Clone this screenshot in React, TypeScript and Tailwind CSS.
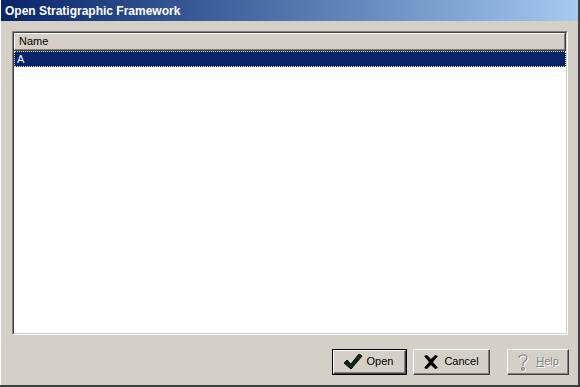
const font = { fontFamily: '"Liberation Sans", "DejaVu Sans", sans-serif' }

const CheckIcon = () => (
  <svg width="20" height="19" viewBox="0 0 20 19">
    <path d="M1 11 L4 8 L8 12 L16 2 L19 4 L8 17 Z" fill="#0b2a10" stroke="#000" strokeWidth="1" />
  </svg>
)

const XIcon = () => (
  <svg width="16" height="16" viewBox="0 0 16 16">
    <path d="M1 2 L4 1 L8 5 L12 1 L15 2 L10 8 L15 14 L12 15 L8 11 L4 15 L1 14 L6 8 Z" fill="#000" />
  </svg>
)

const HelpIcon = () => (
  <svg width="14" height="20" viewBox="0 0 14 20">
    <g fill="none" strokeWidth="1.2">
      <path d="M3 6 C3 2 11 2 11 6 C11 9 7 9 7 12 L7 14" stroke="#ffffff" transform="translate(1 1)" />
      <circle cx="7" cy="17" r="1.3" stroke="#ffffff" transform="translate(1 1)" />
      <path d="M3 6 C3 2 11 2 11 6 C11 9 7 9 7 12 L7 14" stroke="#808080" />
      <circle cx="7" cy="17" r="1.3" stroke="#808080" />
    </g>
  </svg>
)

export default function App() {
  return (
    <div className="w-[580px] h-[387px] bg-[#d4d0c8] text-[11px] text-black overflow-hidden" style={font}>
      <div className="h-full border-r-2 border-b-2 border-r-[#404040] border-b-[#404040] flex flex-col">
        <div className="h-full border-l border-white flex flex-col">
          <div className="h-[21px] flex items-center pl-[4px] bg-gradient-to-r from-[#0a246a] to-[#a6caf0] text-white font-bold text-[12px]">
            Open Stratigraphic Framework
          </div>
          <div className="flex-1 flex flex-col pl-[11px] pr-[9px] pt-[10px]">
            <div className="h-[304px] mr-[1px] border-t border-l border-[#808080] border-r border-b border-r-white border-b-white">
              <div className="h-full border-t border-l border-[#404040] border-r border-b border-r-[#d4d0c8] border-b-[#d4d0c8] bg-white flex flex-col">
                <div className="h-[18px] bg-[#d4d0c8] border-r border-b border-[#404040]">
                  <div className="h-full border-t border-l border-white border-r border-b border-r-[#808080] border-b-[#808080] flex items-center pl-[4px]">
                    Name
                  </div>
                </div>
                <div className="h-[16px] bg-[#0a246a] text-white border border-dotted border-[#f5e9a8] flex items-center pl-[2px]">
                  A
                </div>
              </div>
            </div>
            <div className="flex justify-end mt-[14px]">
              <div className="w-[75px] h-[26px] border border-black">
                <div className="h-full border-t border-l border-white border-r border-b border-r-[#404040] border-b-[#404040]">
                  <div className="h-full border-r border-b border-[#808080] flex items-center justify-center gap-[4px] pr-[2px]">
                    <CheckIcon />
                    <span>Open</span>
                  </div>
                </div>
              </div>
              <div className="w-[77px] h-[26px] ml-[6px] border-t border-l border-white border-r border-b border-r-[#404040] border-b-[#404040]">
                <div className="h-full border-r border-b border-[#808080] flex items-center justify-center gap-[5px]">
                  <XIcon />
                  <span>Cancel</span>
                </div>
              </div>
              <div className="w-[62px] h-[26px] ml-[17px] border-t border-l border-white border-r border-b border-r-[#404040] border-b-[#404040]">
                <div className="h-full border-r border-b border-[#808080] flex items-center justify-center gap-[6px]">
                  <HelpIcon />
                  <span className="text-[#808080] [text-shadow:1px_1px_0_#ffffff]"><u>H</u>elp</span>
                </div>
              </div>
            </div>
          </div>
        </div>
      </div>
    </div>
  )
}
